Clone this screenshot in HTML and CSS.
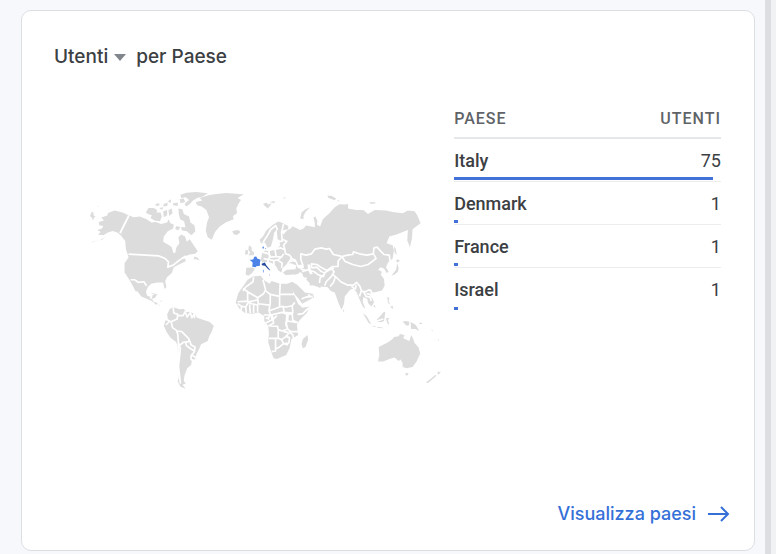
FILE: index.html
```html
<!DOCTYPE html>
<html lang="it">
<head>
<meta charset="utf-8">
<meta name="viewport" content="width=device-width, initial-scale=1">
<title>Utenti per Paese</title>
<link rel="stylesheet" href="styles.css">
</head>
<body>
<main class="page">
  <section class="card">
    <h1 class="title">
      <button class="metric" type="button">Utenti
        <svg class="caret" viewBox="0 0 12 7" aria-hidden="true"><path d="M0 0H12L6 7Z"/></svg>
      </button>
      <span>per Paese</span>
    </h1>
    <div class="content">
      <svg class="map" viewBox="0 0 1110 645" role="img" aria-label="Utenti per Paese">
        <!-- North America -->
        <g class="land">
          <path d="M56 126L72 122 64 113 82 107 84 99 104 92 128 98 146 106 121 158 132 168 134 182 124 168 112 158 98 153 84 158 70 166 54 164 62 156 52 150 66 146 70 138 58 136Z"/>
          <path d="M34 98l6-2 1 10 6 5-5 2-3 10-3-10-6-4zM52 78l3 0 0 3zM76 172l-14 7 2 2zM56 180l-22 7 2 1z"/>
          <path d="M150 107L160 112 180 110 200 118 215 128 228 126 244 132 262 128 266 118 272 130 282 134 280 146 264 154 252 170 250 186 268 196 276 202 280 218 286 220 290 202 299 190 296 172 304 164 316 170 321 186 330 178 342 196 354 214 346 222 330 224 314 230 302 238 316 236 318 244 302 252 282 262 276 280 262 292 256 304 260 322 254 328 250 308 232 308 214 312 204 322 198 336 202 348 212 352 222 344 232 343 226 354 216 358 222 366 234 370 240 378 228 374 216 364 202 358 184 350 172 334 162 318 172 334 168 336 154 310 146 296 134 278 134 250 146 232 138 208 136 184 124 158Z"/>
          <path d="M198 98L206 84 222 84 232 90 230 98 242 98 246 110 240 124 224 122 212 114 216 106 204 102ZM226 74l10-5 4 7-10 2zM238 84l12-2-3 8zM252 72l12-4-2 10-12 2zM250 94l12-4 0 16-10 6zM266 90l10-4 2 14-10 8zM264 64l10-6-2 12zM280 70l14-2 0 10-14-2zM296 86l12 2 4 14 16 8 4 18 12 8 3 18-12 12-14-12-14-2-4-10 14 0-4-18-12-6-4-16zM290 138l12 4-8 10-8-6z"/>
          <path d="M302 44L320 38 350 36 384 40 368 50 352 54 340 62 330 72 320 80 314 72 328 60 318 52 304 54ZM300 58l12-2 4 10-14 4z"/>
          <path d="M344 230l10 4 6 8-10-4-8 0zM210 338l16 4 8 5-14-4zM240 362l6 2-2 3z"/>
        </g>
        <g class="border">
          <path d="M146 108L120 160M146 223L236 228 256 236 266 246 264 262 280 256 290 248 300 240 318 228M152 300L164 300 176 308 192 306 200 318"/>
          <path d="M212 357L216 350M222 366L228 362M236 370L232 378"/>
        </g>
        <!-- South America -->
        <path class="land" d="M262 404L270 388 280 382 292 386 300 389 312 388 320 398 330 396 344 402 352 414 370 420 390 427 402 438 396 456 389 468 384 484 364 494 358 508 350 524 346 540 336 544 334 556 322 566 318 578 314 588 312 604 318 612 308 616 318 628 302 622 294 606 296 560 293 496 288 486 272 474 260 456 252 438 256 424 264 418Z"/>
        <g class="border" transform="translate(0 300)">
          <path d="M280 82L282 100 294 104 292 118 274 126 278 144 290 152 294 164 296 192 294 300M256 118L270 124 258 136M296 108L310 108 316 96 322 112 332 98 336 114 344 102 344 116M292 154L306 156 318 168 328 178 326 186 310 188 302 196 296 192M318 188L330 184 334 196 346 202 344 214 334 208 320 198ZM346 214L334 228 334 240 350 244M336 226L354 238M296 196L302 206 296 260 302 312"/>
        </g>
        <!-- Greenland and North Atlantic -->
        <g class="land" transform="translate(330 0)">
          <path d="M18 66L38 62 30 54 56 46 80 42 110 39 140 41 162 43 144 54 154 60 146 72 140 86 142 100 130 108 132 118 108 128 90 140 76 156 66 180 54 172 48 152 52 128 58 112 50 90 36 80 22 76Z"/>
          <path d="M128 154l10-3 10 0 4 6-10 8-10-2zM220 72l12-4 2 6 12-4-6 10-6 6zM240 66l16-3-2 7zM278 54l12-2-4 4zM332 116l4-18 12-10 14-6-14 14-6 12 0 10z"/>
          <path d="M178 196l8 6 0 10 8 6-2 8-16 0 6-8-6-8zM168 210l8 2-2 12-8 0z"/>
        </g>
        <!-- Europe and Asia -->
        <path class="land" d="M540 180L550 170 560 152 578 136 596 125 606 128 626 138 626 148 612 150 606 158 612 164 622 152 634 146 638 139 650 144 662 150 672 146 680 137 706 142 706 130 702 112 708 110 714 124 712 134 722 140 730 118 750 100 766 82 780 73 796 74 806 72 806 86 830 90 852 90 866 102 886 90 920 92 940 96 970 100 986 92 1006 94 1014 106 1024 130 1000 148 998 176 992 202 984 182 986 150 970 156 952 164 930 170 922 190 940 196 944 212 940 236 926 248 920 262 928 276 922 280 914 266 904 262 896 270 908 276 904 284 914 298 916 318 908 332 884 338 872 336 878 350 884 368 876 380 866 370 864 358 852 352 850 366 858 388 850 380 840 358 832 338 822 326 812 330 796 350 794 372 786 390 778 372 766 338 754 334 744 322 720 320 704 310 682 294 664 278 650 284 618 286 610 278 622 270 648 268 650 256 634 250 624 250 608 266 606 278 596 272 590 260 578 250 566 246 548 248 544 238 548 218 556 212 568 214 592 208 602 196 600 188 614 184 602 182 594 178 592 158 594 146 584 158 580 180 574 200 564 204 556 188 544 190Z"/>
        <g class="land">
          <path d="M500 264L518 263 526 267 518 280 506 288 498 284Z"/>
          <path d="M744 47l12 0 14 9-4 5-20-8zM870 68l14-2 6 4-16 2zM772 62l8 0-4 3z"/>
          <path d="M944 200l6 8 2 18-6-8zM954 238l8 4-6 6-6-4zM954 250l4 14-2 12-10 8-10 4 8-10 6-8z"/>
          <path d="M624 312L638 306 652 314 666 328 676 338 700 342 704 352 686 362 668 372 658 358 646 344 636 326Z"/>
          <path d="M668 286L678 278 700 290 720 310 724 324 706 322 690 316 672 296Z"/>
          <path d="M850 400l12 10 14 24-8-4zM874 438l16 2-2 2zM892 420l8-8 14-16 4 2-4 26-8 4-12-2zM920 416l10-2-4 8 4 12-4 0-4-10zM924 352l6 2-2 12 6 8-8-4zM932 382l8-4 2 10zM894 441l18 3-2 2-16-2zM790 389l5 4-3 5zM884 374l6 10-8-4z"/>
        </g>
        <g class="border">
          <path d="M550 188L564 166 574 148 590 136M588 136L594 150M612 132L606 158 608 184M590 208L602 204 616 210 618 222 630 226 636 234 630 244 624 252M608 178L622 184 612 196 616 208M546 216L568 222 574 232 590 230 606 232 612 222M568 210L570 232 564 246M570 240L582 242 596 240 604 232M582 240L584 258M596 242L608 250 606 264M586 208L590 232M552 236L568 240M636 236L650 242"/>
          <path d="M632 246L640 242 650 246 654 256 666 266M666 266L670 256 664 240 664 222 680 226 696 222 706 208 726 204 740 208 750 206 762 224 780 228 788 230 804 226 820 224 822 216 840 222 862 226 882 222 884 204 894 202 904 214 914 224 930 226 932 244M788 230L796 244 820 254 844 260 866 254 880 244 890 236 884 224M788 230L776 244 776 260 760 260 742 272 724 262 712 254 696 252 696 264"/>
          <path d="M696 264L712 262 724 274 736 280 732 290 718 286 704 276 684 270 668 276M734 280L756 266 764 276 756 290 740 306 736 318M736 282L722 294 720 310M760 284L772 294 784 306 804 316 822 316 832 308 842 320 846 334 858 336 870 330 878 336M768 290L762 308 752 320M816 320L828 328 830 316M846 334L840 350M852 334L860 350 872 352 876 364M862 342L872 344 882 356M660 278L670 292 690 314M640 284L636 300M664 268L682 272M652 284L662 300 672 312M682 296L664 296M690 266L694 278"/>
          <path d="M666 358L680 352 700 350M686 344L692 350M746 272L764 264M696 318L716 324M656 292L640 304"/>
        </g>
        <path class="water" d="M684 254l8 0 2 18 6 10-8 2-6-12zM650 256l20-2 4 10-18 2zM576 212l16-6 6-16-8-4-6 12-10 8z"/>
        <!-- Africa -->
        <g transform="translate(330 270)">
          <path class="land" d="M174 30L190 20 214 18 222 30 240 42 246 34 272 42 304 42 312 72 324 98 338 114 360 110 352 130 330 152 322 166 326 196 306 208 300 236 290 256 262 268 252 266 244 244 236 218 238 190 236 170 224 154 224 140 206 128 190 132 166 130 150 118 138 98 146 70 160 50ZM354 196L356 210 348 232 340 236 336 224 340 208Z"/>
          <path class="border" d="M192 22L190 36 168 52 160 64M160 56L174 66 204 84 222 72 228 60 220 30M174 66L174 94 144 96M226 62L242 74 270 80 272 40M272 74L314 74M242 74L242 100 238 124M270 80L270 110 290 112 308 108 316 98M204 84L206 102 240 106M174 96L188 94 206 90M144 102L156 110 168 112 176 98 186 102 204 106 204 126M156 110L154 122M168 110L170 130M180 104L182 130M192 104L192 130M238 124L248 120 270 112M238 124L244 136 278 128 294 134 310 132M222 136L244 136 248 150 228 160M228 144L236 146M248 136L252 160 236 170M280 108L284 128 310 130 308 108M292 134L290 160 294 178 278 184 266 180 264 170 236 168M296 134L294 154 320 158M308 134L310 152 326 160M324 134L340 132 358 114M326 98L330 104 354 108M294 178L304 186 326 186M266 178L266 206 238 206M266 206L276 210 290 200 298 190M258 206L258 244 246 246M258 238L270 232 282 222 276 210M282 222L296 226M298 186L310 196 312 206M286 200L300 204 298 220 284 222M250 150L262 138M282 186L296 188M240 136L236 150M288 156L296 156M288 158L290 170"/>
        </g>
        <!-- Oceania -->
        <g class="land" transform="translate(690 300)">
          <path d="M208 202L236 188 250 178 254 172 268 170 272 163 286 166 282 176 300 184 306 166 312 178 316 190 328 204 333 222 322 246 310 262 292 266 280 262 280 250 274 240 268 244 256 234 240 238 222 246 206 246 210 226ZM288 280l10 0-4 8-4 0z"/>
          <path d="M280 126l10-2 16 4 14 8 10 18-12-6-12 0-4-12-10 2zM386 274l4 4 5-2-5 8-5 0zM382 288l-6 6-20 16-6-1 14-11 14-12zM332 128l8 4-2 2-8-2zM364 148l8 6-2 1zM386 176l4 8-2 0z"/>
        </g>
        <path class="border" d="M992 428V450M892 424L912 418"/>
        <!-- Countries with users -->
        <path class="few" d="M510 240L517 240 521 238 524 231 530 230 533 236 543 240 541 248 541 258 530 259 528 262 518 261 519 248Z"/>
        <path class="few" d="M548 202l4-3 1 6-3 2zM556 204l3 2-2 2zM550 270l2 0 0 8-2 0zM568 284l3 1-1 3z"/>
        <path class="many" d="M546 252L556 248 560 256 570 268 572 273 566 268 556 258 547 256Z"/>
      </svg>
      <table class="countries">
        <thead>
          <tr><th scope="col">Paese</th><th scope="col">Utenti</th></tr>
        </thead>
        <tbody>
          <tr><th scope="row">Italy<span class="bar" style="width:97%"></span></th><td>75</td></tr>
          <tr><th scope="row">Denmark<span class="bar" style="width:1.3%"></span></th><td>1</td></tr>
          <tr><th scope="row">France<span class="bar" style="width:1.3%"></span></th><td>1</td></tr>
          <tr><th scope="row">Israel<span class="bar" style="width:1.3%"></span></th><td>1</td></tr>
        </tbody>
      </table>
    </div>
    <a class="more" href="#paesi">Visualizza paesi
      <svg class="arrow" viewBox="0 0 22 18" aria-hidden="true"><path d="M0 9H20M13 2L20 9 13 16"/></svg>
    </a>
  </section>
</main>
<div class="rail"></div>
</body>
</html>
```
FILE: styles.css
```css
* {
  box-sizing: border-box;
}

body {
  display: flex;
  min-height: 100vh;
  margin: 0;
  background: #f6f8fb;
  color: #3c4043;
  font-family: Roboto, "Liberation Sans", sans-serif;
  font-size: 18px;
  line-height: 24px;
}

.page {
  display: flex;
  flex: 1;
  padding: 10px 10px 3px 21px;
}

.rail {
  width: 11px;
  border-left: 6px solid #dcdee1;
  background: #f1f2f4;
}

.card {
  display: flex;
  flex: 1;
  flex-direction: column;
  padding: 34px 24px 24px 32px;
  border: 1px solid #dcdfe2;
  border-radius: 10px;
  background: #fff;
}

.title {
  display: flex;
  gap: 10px;
  margin: 0;
  font: 500 19px/24px Inter, sans-serif;
}

.metric {
  display: flex;
  align-items: center;
  gap: 6px;
  padding: 0;
  border: 0;
  background: none;
  color: inherit;
  font: inherit;
}

.caret {
  width: 12px;
  height: 7px;
  fill: #80868b;
}

.content {
  display: grid;
  grid-template-columns: 3fr 2fr;
  align-items: start;
  flex: 1;
  padding: 31px 9px 0 0;
}

.map {
  width: 100%;
  padding: 80px 5px 0 26px;
}

.land {
  fill: #dcdcdc;
}

.water {
  fill: #fff;
}

.border {
  fill: none;
  stroke: #fff;
  stroke-width: 5;
  stroke-linejoin: round;
}

.few {
  fill: #4d82e8;
}

.many {
  fill: #23489d;
}

.countries {
  width: 100%;
  border-collapse: collapse;
}

.countries th {
  padding: 0;
  font-weight: 500;
  text-align: left;
}

.countries td,
.countries th:last-child {
  padding: 0;
  text-align: right;
}

.countries thead th {
  height: 38px;
  border-bottom: 2px solid #e6e7e8;
  color: #5f6368;
  font-size: 16px;
  letter-spacing: 1px;
  text-transform: uppercase;
}

.countries tbody tr {
  position: relative;
  height: 43px;
  border-bottom: 1px solid #eceded;
}

.countries tbody th,
.countries tbody td {
  padding-top: 2px;
}

.countries tbody tr:last-child {
  border-bottom: 0;
}

.bar {
  position: absolute;
  bottom: 0;
  left: 0;
  height: 3px;
  background: #4272d7;
}

.more {
  display: flex;
  align-items: center;
  align-self: flex-end;
  gap: 12px;
  color: #3570d8;
  font: 500 18px/24px Inter, sans-serif;
  text-decoration: none;
}

.arrow {
  width: 22px;
  height: 18px;
  fill: none;
  stroke: currentColor;
  stroke-width: 2;
}
```
